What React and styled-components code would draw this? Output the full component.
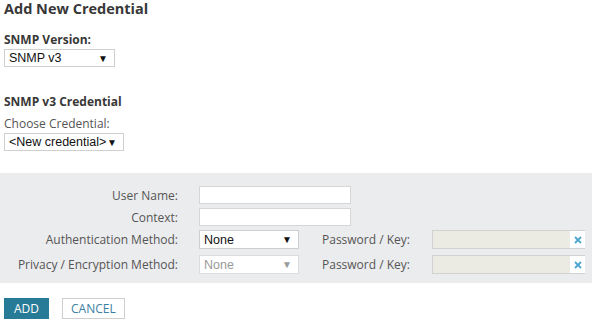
import React from 'react';
import styled, { createGlobalStyle } from 'styled-components';

const GlobalStyle = createGlobalStyle`
  html, body {
    margin: 0;
    padding: 0;
    background: #ffffff;
  }
  body {
    font-family: 'Open Sans', Arial, sans-serif;
    color: #333;
  }
`;

const Page = styled.div`
  width: 592px;
  height: 321px;
  overflow: hidden;
`;

const Title = styled.h1`
  margin: 0;
  padding-left: 4px;
  font-size: 14.5px;
  line-height: 17px;
  font-weight: bold;
  color: #383838;
`;

const Section = styled.div`
  padding-left: 4px;
  display: flex;
  flex-direction: column;
  align-items: flex-start;
  margin-top: ${(p) => p.top}px;
`;

const SectionLabel = styled.div`
  font-size: 12px;
  line-height: 14px;
  font-weight: bold;
  color: #383838;
`;

const FieldLabel = styled.div`
  font-size: 12px;
  line-height: 14px;
  color: #555;
  margin-top: 8px;
`;

const DropDown = styled.div`
  box-sizing: border-box;
  margin-top: 2px;
  width: ${(p) => p.w}px;
  height: 18px;
  border: 1px solid ${(p) => (p.disabled ? '#dcdcdc' : '#cfcfcf')};
  background: #fff;
  display: flex;
  align-items: center;
  justify-content: space-between;
  padding: 0 6px 0 4px;
  white-space: nowrap;
  font-family: 'Liberation Sans', Arial, sans-serif;
  font-size: 12.5px;
  color: ${(p) => (p.disabled ? '#9a9a9a' : '#111')};
  span:last-child {
    font-size: 10px;
    color: ${(p) => (p.disabled ? '#9a9a9a' : '#111')};
  }
`;

const Panel = styled.div`
  margin-top: 22px;
  background: #ebecee;
  padding: 13px 0 9px;
  display: flex;
  flex-direction: column;
  gap: 4px;
`;

const Row = styled.div`
  display: flex;
  align-items: center;
  height: ${(p) => p.h}px;
  margin-top: ${(p) => p.gap || 0}px;
`;

const RowLabel = styled.div`
  width: 178px;
  margin-right: 21px;
  text-align: right;
  font-size: 12px;
  color: #555;
  white-space: nowrap;
`;

const TextBox = styled.div`
  box-sizing: border-box;
  width: 152px;
  height: 18px;
  border: 1px solid #d6d6d6;
  background: #fff;
`;

const PanelSelect = styled(DropDown)`
  margin-top: 0;
  height: ${(p) => p.h}px;
`;

const PwLabel = styled.div`
  margin-left: 23px;
  width: 110px;
  font-size: 12px;
  color: #555;
  white-space: nowrap;
`;

const PwBox = styled.div`
  box-sizing: border-box;
  width: 153px;
  height: ${(p) => p.h}px;
  border: 1px solid #d2d2d2;
  border-right: none;
  background: #ebeae3;
  display: flex;
  justify-content: flex-end;
`;

const ClearBtn = styled.div`
  width: 15px;
  height: 100%;
  background: #fff;
  display: flex;
  align-items: center;
  justify-content: center;
`;

const Buttons = styled.div`
  display: flex;
  gap: 13px;
  padding-left: 4px;
  margin-top: 15px;
`;

const Button = styled.div`
  box-sizing: border-box;
  height: 21px;
  padding: 0 ${(p) => (p.primary ? 10 : 8)}px;
  display: flex;
  align-items: center;
  font-size: 12px;
  text-transform: uppercase;
  background: ${(p) => (p.primary ? '#277b96' : '#fff')};
  color: ${(p) => (p.primary ? '#fff' : '#3b7fa3')};
  border: ${(p) => (p.primary ? 'none' : '1px solid #cfcfcf')};
`;

const ClearIcon = () => (
  <svg width="8" height="8" viewBox="0 0 8 8">
    <path d="M1 1 L7 7 M7 1 L1 7" stroke="#4aa5cf" strokeWidth="1.8" />
  </svg>
);

const Select = ({ value, w, disabled, h }) => (
  <PanelSelect w={w} h={h} disabled={disabled}>
    <span>{value}</span>
    <span>▼</span>
  </PanelSelect>
);

const PasswordRow = ({ label, method, disabled, gap }) => (
  <Row h={19} gap={gap}>
    <RowLabel>{label}</RowLabel>
    <Select value={method} w={100} h={19} disabled={disabled} />
    <PwLabel>Password / Key:</PwLabel>
    <PwBox h={19}>
      <ClearBtn>
        <ClearIcon />
      </ClearBtn>
    </PwBox>
  </Row>
);

export default function App() {
  return (
    <Page>
      <GlobalStyle />
      <Title>Add New Credential</Title>
      <Section top={16}>
        <SectionLabel>SNMP Version:</SectionLabel>
        <DropDown w={111}>
          <span>SNMP v3</span>
          <span>▼</span>
        </DropDown>
      </Section>
      <Section top={28}>
        <SectionLabel>SNMP v3 Credential</SectionLabel>
        <FieldLabel>Choose Credential:</FieldLabel>
        <DropDown w={120}>
          <span>&lt;New credential&gt;</span>
          <span>▼</span>
        </DropDown>
      </Section>
      <Panel>
        <Row h={18}>
          <RowLabel>User Name:</RowLabel>
          <TextBox />
        </Row>
        <Row h={18}>
          <RowLabel>Context:</RowLabel>
          <TextBox />
        </Row>
        <PasswordRow label="Authentication Method:" method="None" />
        <PasswordRow label="Privacy / Encryption Method:" method="None" disabled gap={2} />
      </Panel>
      <Buttons>
        <Button primary>Add</Button>
        <Button>Cancel</Button>
      </Buttons>
    </Page>
  );
}
